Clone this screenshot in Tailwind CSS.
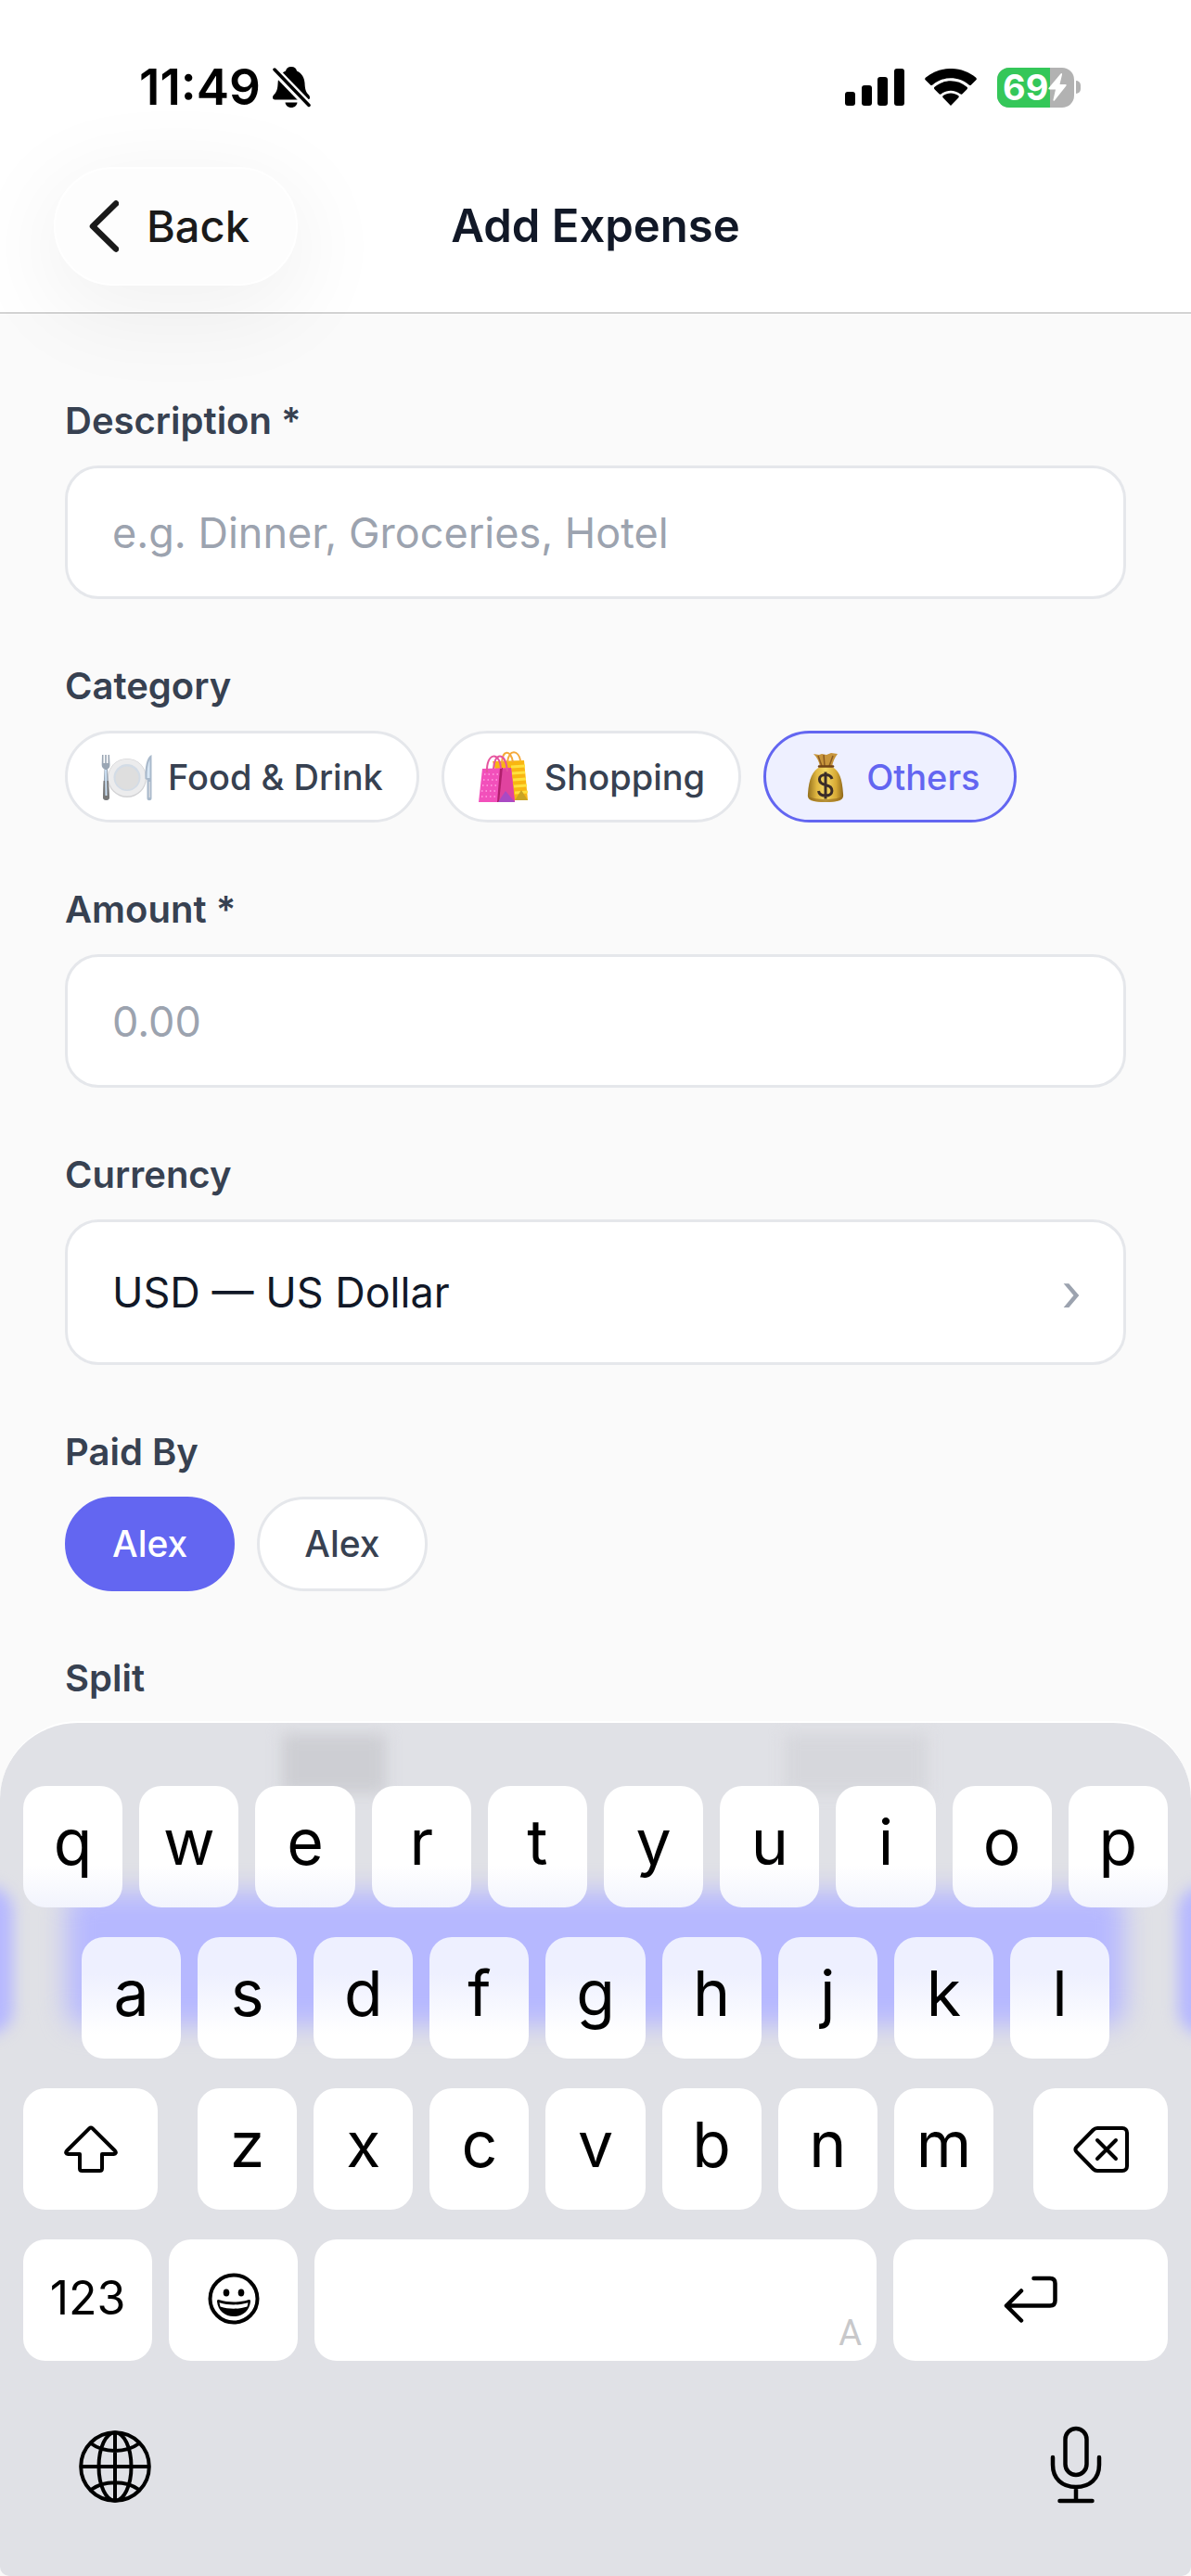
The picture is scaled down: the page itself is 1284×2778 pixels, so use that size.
<!DOCTYPE html>
<html lang="en">
<head>
    <meta charset="utf-8">
    <meta name="viewport" content="width=device-width, initial-scale=1">
    <title>Add Expense</title>
    <script src="https://cdn.jsdelivr.net/npm/@tailwindcss/browser@4"></script>
</head>
<body class="min-h-screen flex flex-col bg-[#fafafa] font-['Inter','Liberation_Sans',sans-serif] text-[#111827]">
    <header class="bg-white border-b border-[#b2b2b2] pt-16 pb-[29px]">
        <!-- status bar -->
        <div class="h-[60px] flex items-center justify-between pl-[150px] pr-[119px] text-black">
            <div class="flex items-center gap-3">
                <span class="text-[53px] leading-[60px] font-semibold">11:49</span>
                <svg class="w-[42px] h-[46px]" viewBox="0 0 42 46" fill="none">
                    <path d="M21 1c3.500 0 5.500 2 6 4.500 5.500 2.500 8 7 8.500 13 .4 7 1 9.500 4.500 13 1.500 1.700 1.500 5-1 5H3.500c-3 0-3-3.300-1.500-5 3.500-3.700 4.200-6 4.600-13 .4-6 2.900-10.500 8.400-13C15.500 3 17.500 1 21 1z" fill="#000" />
                    <path d="M14.500 39.500h13c-.5 3.300-3 5.500-6.500 5.500s-6-2.200-6.500-5.500z" fill="#000" />
                    <path d="M2.500 4l37.500 39" stroke="#fff" stroke-width="9" />
                    <path d="M3 4l37 38.500" stroke="#000" stroke-width="3.500" stroke-linecap="round" />
                </svg>
            </div>
            <div class="flex items-center">
                <svg class="w-16 h-10" viewBox="0 0 64 40" fill="#000">
                    <rect x="0" y="25" width="11" height="15" rx="3" />
                    <rect x="18" y="18" width="11" height="22" rx="3" />
                    <rect x="35" y="9" width="11" height="31" rx="3" />
                    <rect x="53" y="0" width="11" height="40" rx="3" />
                </svg>
                <svg class="w-14 h-10 ml-[22px]" viewBox="0 0 56 40" fill="#000">
                    <path d="M28 40l-8.200-8.400c-.8-.8-.8-1.800.1-2.500 4.600-3.500 11.600-3.500 16.200 0 .9.700.9 1.700.1 2.500z" />
                    <path d="M15.500 27.200l-5-5c-.8-.8-.7-1.800.1-2.500 10-8.600 24.800-8.600 34.800 0 .8.700.9 1.700.1 2.500l-5 5c-.7.700-1.600.7-2.400.1-6-4.700-14.200-4.700-20.200 0-.8.600-1.700.6-2.400-.1z" />
                    <path d="M6 17.500l-5.300-5.200c-.8-.8-.7-1.700.1-2.500C16.200-3.300 39.800-3.300 55.200 9.800c.8.800.9 1.700.1 2.500L50 17.500c-.7.700-1.600.7-2.400 0-11.300-9.600-27.900-9.600-39.200 0-.8.700-1.700.7-2.400 0z" />
                </svg>
                <div class="relative w-[83px] h-[43px] ml-[22px] rounded-[13px] bg-[#b2b2b2] flex items-center">
                    <div class="absolute inset-y-0 left-0 rounded-l-[13px] bg-[#34c759]" style="width:69%"></div>
                    <span class="relative pl-[6px] text-[38px] leading-[43px] font-bold text-white">69</span>
                    <svg class="relative w-5 h-[30px]" viewBox="0 0 20 30" fill="#fff">
                        <path d="M13.500 0.600c.9-1 1.800-.5 1.500.8L12.500 12h6c1.200 0 1.500.8.8 1.700L7 29.300c-.8 1-1.900.6-1.500-.8L8 17.500H1.500c-1.200 0-1.500-.8-.8-1.700z" />
                    </svg>
                </div>
                <div class="w-[5px] h-[14px] ml-[2px] rounded-r-full bg-[#b2b2b2]"></div>
            </div>
        </div>
        <!-- navigation -->
        <nav class="mt-14 grid grid-cols-[1fr_auto_1fr] items-center px-[58px]">
            <button type="button" class="justify-self-start h-32 w-[263px] pl-9 flex items-center gap-[30px] rounded-full bg-[#fdfdfd] border-2 border-white text-[#1a1a1a] shadow-[0_22px_100px_10px_rgba(0,0,0,0.06)]">
                <svg class="w-8 h-14" viewBox="0 0 32 56" fill="none" stroke="currentColor" stroke-width="6.500" stroke-linecap="round" stroke-linejoin="round">
                    <path d="M29 3.500L4 28l25 24.500" />
                </svg>
                <span class="text-[47px] leading-[56px] font-medium">Back</span>
            </button>
            <h1 class="text-[49px] leading-[56px] font-semibold">Add Expense</h1>
        </nav>
    </header>

    <main class="flex-1 px-[70px] pt-[92px] flex flex-col gap-[70px] text-[#374151]">
        <div class="flex flex-col gap-6">
            <label for="description" class="text-[40px] leading-[48px] font-semibold">Description *</label>
            <input id="description" type="text" placeholder="e.g. Dinner, Groceries, Hotel" class="h-36 px-12 rounded-[36px] border-3 border-[#e5e7eb] bg-white text-[45px] text-[#111827] placeholder:text-[#9ca3af] outline-none">
        </div>
        <div class="flex flex-col gap-6">
            <div id="category" class="text-[40px] leading-[48px] font-semibold">Category</div>
            <div role="group" aria-labelledby="category" class="flex gap-6 text-[38px] leading-[48px] font-medium">
                <button type="button" class="h-[99px] px-9 flex items-center gap-4 rounded-full border-3 border-[#e5e7eb] bg-white">
                    <svg class="w-14 h-14" viewBox="0 0 56 56">
                        <circle cx="28" cy="29" r="21" fill="#d2d2d4" />
                        <circle cx="28" cy="28.500" r="20" fill="#ececed" />
                        <circle cx="28" cy="28.500" r="14.500" fill="#d3dce6" />
                        <circle cx="28" cy="29" r="12.500" fill="#dedede" />
                        <path d="M1 4h1.500v9h1.700V4h1.600v9h1.700V4H9l.5 11c0 2.500-1 3.500-2.500 4.300L9 50c0 4-7 4-7 0l1.500-30.700C2 18.500.7 17.500.7 15z" fill="#9aa6b4" />
                        <path d="M2.600 32h5.300L9 50c0 4-7 4-7 0z" fill="#777" />
                        <path d="M4 20h2l.5 28h-2z" fill="#c9def2" />
                        <path d="M54.500 4v47c0 3-5 3-5 0V31l-2-1c-.5-12 1.500-24 7-26z" fill="#a9b9cb" />
                        <path d="M52.500 9v20h-3c0-8 .5-15 3-20z" fill="#d8e7f5" />
                        <path d="M51.500 33h1.500v17h-1.500z" fill="#d5d9df" />
                    </svg>
                    <span>Food &amp; Drink</span>
                </button>
                <button type="button" class="h-[99px] px-9 flex items-center gap-4 rounded-full border-3 border-[#e5e7eb] bg-white">
                    <svg class="w-14 h-14" viewBox="0 0 56 56" fill="none">
                        <path d="M16 11l34-1 4 43H30z" fill="#f9b612" />
                        <path d="M36 17l15-1M37 24l14-1M38 31l14-1M39 38l14-1M40 45l14-1" stroke="#ffe03d" stroke-width="3" />
                        <path d="M26 14C26-2 36-2 38 12M32 12C34-3 44-1 46 10" stroke="#f5a93a" stroke-width="2" />
                        <path d="M5 19l31-1 4 37H1z" fill="#f250bb" />
                        <path d="M27 19l9-1 4 37H22z" fill="#e0439f" />
                        <path d="M23 55l4-37h-3l-3 37z" fill="#b01f6c" />
                        <path d="M22 55l8-12 10 12z" fill="#a94ac4" />
                        <path d="M7 25h16M6 31h16M5 37h16M4 43h16M4 49h15" stroke="#ffa0e2" stroke-width="1.500" stroke-dasharray="1.500 3" />
                        <path d="M10 23C9 1 24 0 25 19M17 19C18 1 30 0 32 22" stroke="#e6559f" stroke-width="2" />
                        <path d="M40 53l7-11 7 11z" fill="#c9a423" />
                    </svg>
                    <span>Shopping</span>
                </button>
                <button type="button" aria-pressed="true" class="h-[99px] px-9 flex items-center gap-4 rounded-full border-3 border-[#6366f1] bg-[#eef0ff] text-[#6366f1]">
                    <svg class="w-14 h-14" viewBox="0 0 56 56">
                        <defs>
                            <linearGradient id="sack" x1="0" x2="1" y1="0" y2="0">
                                <stop offset="0" stop-color="#94701d" />
                                <stop offset=".25" stop-color="#e0b741" />
                                <stop offset=".5" stop-color="#f3d763" />
                                <stop offset=".8" stop-color="#d7aa35" />
                                <stop offset="1" stop-color="#8e671a" />
                            </linearGradient>
                        </defs>
                        <path d="M15 3l6 1 3-1 5 1 5-2 7 1c-3 4-5 8-6 14H22c-1-6-3-10-7-14z" fill="#c7953c" />
                        <path d="M20 5l4 11M26 4l1 12M36 5l-4 11" stroke="#8a5a22" stroke-width="1.500" />
                        <path d="M22 17h13c8 4 11 13 12 29 1 7-4 9-19 9S8 53 9 46c1-16 5-25 13-29z" fill="url(#sack)" />
                        <path d="M10 49c6 4 30 4 36 0-1 4-6 6-18 6s-17-2-18-6z" fill="#8d641c" opacity=".6" />
                        <path d="M21 16.500h15" stroke="#6f4117" stroke-width="2.500" stroke-linecap="round" />
                        <path d="M35 30c-1-3-3.500-4.500-7-4.500-8.500 0-9 9 0 11 9.500 2 9 11.500 0 11.500-4 0-7-1.500-7.500-5M28 22.500v29" fill="none" stroke="#3a2c28" stroke-width="3" />
                    </svg>
                    <span>Others</span>
                </button>
            </div>
        </div>
        <div class="flex flex-col gap-6">
            <label for="amount" class="text-[40px] leading-[48px] font-semibold">Amount *</label>
            <input id="amount" type="text" inputmode="decimal" placeholder="0.00" class="h-36 px-12 rounded-[36px] border-3 border-[#e5e7eb] bg-white text-[45px] text-[#111827] placeholder:text-[#9ca3af] outline-none">
        </div>
        <div class="flex flex-col gap-6">
            <label for="currency" class="text-[40px] leading-[48px] font-semibold">Currency</label>
            <div class="relative">
                <select id="currency" class="block w-full h-[157px] px-12 appearance-none rounded-[36px] border-3 border-[#e5e7eb] bg-white text-[45px] text-[#111827]">
                    <option>USD — US Dollar</option>
                </select>
                <span class="absolute inset-y-0 right-12 flex items-center text-[56px] text-[#9ca3af] pointer-events-none">›</span>
            </div>
        </div>
        <div class="flex flex-col gap-6">
            <div id="paid-by" class="text-[40px] leading-[48px] font-semibold">Paid By</div>
            <div role="group" aria-labelledby="paid-by" class="flex gap-6 text-[39px] leading-[48px] font-medium">
                <button type="button" aria-pressed="true" class="h-[102px] px-12 rounded-full border-3 border-[#6366f1] bg-[#6366f1] text-white">Alex</button>
                <button type="button" class="h-[102px] px-12 rounded-full border-3 border-[#e5e7eb] bg-white">Alex</button>
            </div>
        </div>
        <div class="h-[70px] text-[40px] leading-[48px] font-semibold">Split</div>
    </main>

    <!-- on-screen keyboard -->
    <section aria-label="Keyboard" class="relative overflow-hidden rounded-t-[84px] rounded-b-[10px] border-t-2 border-white bg-[#e0e1e6] px-[25px] pt-[68px] pb-[78px] text-black">
        <!-- page content showing through the glass -->
        <div class="absolute top-3 left-[304px] w-28 h-16 bg-[#cdced3] blur-[8px]"></div>
        <div class="absolute top-3 left-[846px] w-[154px] h-16 bg-[#d6d7dc] blur-[8px]"></div>
        <div class="absolute top-[182px] inset-x-[72px] h-36 rounded-[20px] bg-[#b6b8ff] blur-[14px]"></div>
        <div class="absolute top-[176px] -left-10 w-[54px] h-40 rounded-[30px] bg-[#b6b8ff] blur-[8px]"></div>
        <div class="absolute top-[176px] -right-10 w-[54px] h-40 rounded-[30px] bg-[#b6b8ff] blur-[8px]"></div>

        <div class="relative flex flex-col gap-8">
            <div data-keys="qwertyuiop" data-tone="top" class="flex gap-[18px]"></div>
            <div data-keys="asdfghjkl" data-tone="middle" class="flex gap-[18px] px-[63px]"></div>
            <div class="flex gap-[43px]">
                <button type="button" aria-label="Shift" class="w-[145px] h-[131px] rounded-[24px] bg-white flex items-center justify-center">
                    <svg class="w-[58px] h-[52px]" viewBox="0 0 58 52" fill="none" stroke="currentColor" stroke-width="4" stroke-linejoin="round">
                        <path d="M27.500 3.200L3 27.500c-1.500 1.700-.8 3.500 1.200 3.500H17v15.500c0 1.700 1 2.500 2.500 2.500h19c1.500 0 2.500-.8 2.500-2.500V31h12.800c2 0 2.700-1.800 1.200-3.500L30.500 3.200c-1-1-2-1-3 0z" />
                    </svg>
                </button>
                <div data-keys="zxcvbnm" data-tone="plain" class="flex-1 flex gap-[18px]"></div>
                <button type="button" aria-label="Delete" class="w-[145px] h-[131px] rounded-[24px] bg-white flex items-center justify-center">
                    <svg class="w-[60px] h-[52px]" viewBox="0 0 60 52" fill="none" stroke="currentColor" stroke-width="4" stroke-linecap="round" stroke-linejoin="round">
                        <path d="M26 3h27c3 0 5 2 5 5v36c0 3-2 5-5 5H26c-2 0-3-.5-4.500-2L3.500 28.500c-1.500-1.500-1.500-3.500 0-5L21.500 5C23 3.500 24 3 26 3zM26 16l20 20M46 16L26 36" />
                    </svg>
                </button>
            </div>
            <div class="flex gap-[18px]">
                <button type="button" class="w-[139px] h-[131px] pb-1 rounded-[24px] bg-white text-[50px]">123</button>
                <button type="button" aria-label="Emoji" class="w-[139px] h-[131px] pb-1 rounded-[24px] bg-white flex items-center justify-center">
                    <svg class="w-14 h-14" viewBox="0 0 56 56" fill="none">
                        <circle cx="28" cy="28" r="25.500" stroke="#000" stroke-width="4" />
                        <ellipse cx="20" cy="21.500" rx="3.300" ry="4" fill="#000" />
                        <ellipse cx="36" cy="21.500" rx="3.300" ry="4" fill="#000" />
                        <path d="M10 31c0-1.800 1-2.200 2.500-1.700 10 3 21 3 31 0 1.500-.5 2.500-.1 2.500 1.700-1 10-8.500 16-18 16S11 41 10 31z" fill="#000" />
                        <path d="M12.500 32.200c10 3 21 3 31 0l-1 4.300c-9 3-20 3-29 0z" fill="#fff" />
                    </svg>
                </button>
                <button type="button" aria-label="Space" class="flex-1 h-[131px] rounded-[24px] bg-white flex items-end justify-end px-4 pb-2 text-[38px] leading-[44px] text-[#c8c8ca] font-['Liberation_Sans_Narrow','Roboto',sans-serif]">A</button>
                <button type="button" aria-label="Return" class="w-[296px] h-[131px] pb-1 rounded-[24px] bg-white flex items-center justify-center">
                    <svg class="w-[58px] h-[52px]" viewBox="0 0 58 52" fill="none" stroke="currentColor" stroke-width="4.500" stroke-linecap="round" stroke-linejoin="round">
                        <path d="M32.500 4H50c3.500 0 5.500 2 5.500 5.500V28c0 3.500-2 5.500-5.500 5.500H3M19 17.500l-16 16 16 16" />
                    </svg>
                </button>
            </div>
        </div>
        <div class="relative mt-[70px] px-[60px] h-[84px] flex items-end justify-between">
            <button type="button" aria-label="Next keyboard">
                <svg class="w-[78px] h-20" viewBox="0 0 78 80" fill="none" stroke="currentColor" stroke-width="4">
                    <circle cx="39" cy="40" r="36.800" />
                    <ellipse cx="39" cy="40" rx="17.500" ry="36.800" />
                    <path d="M39 3v74M2 40h74M13 15c14 10.500 38 10.500 52 0M13 65c14-10.500 38-10.500 52 0" />
                </svg>
            </button>
            <button type="button" aria-label="Dictate" class="px-[11px]">
                <svg class="w-14 h-[84px]" viewBox="0 0 56 84" fill="none" stroke="currentColor" stroke-width="4.500" stroke-linecap="round">
                    <rect x="16.500" y="3" width="23" height="50" rx="11.500" />
                    <path d="M3 34v8c0 15 10 24 25 24s25-9 25-24v-8M28 66v15M10.500 81h35" />
                </svg>
            </button>
        </div>
    </section>

    <script type="text/javascript">
        // background of the keys, by row
        const tones = {
            top: "bg-linear-to-b from-white from-65% to-[#f2f4fd]",
            middle: "bg-linear-to-b from-[#eef0ff] from-30% to-white to-80%",
            plain: "bg-white",
        };

        // fill each row with one button for each letter
        document.querySelectorAll("[data-keys]").forEach(row => {
            Array.from(row.dataset.keys).forEach(letter => {
                const key = document.createElement("button");
                key.type = "button";
                key.className = `flex-1 h-[131px] pb-3 rounded-[24px] text-[68px] leading-[80px] ${tones[row.dataset.tone]}`;
                key.textContent = letter;
                row.appendChild(key);
            });
        });
    </script>
</body>
</html>
